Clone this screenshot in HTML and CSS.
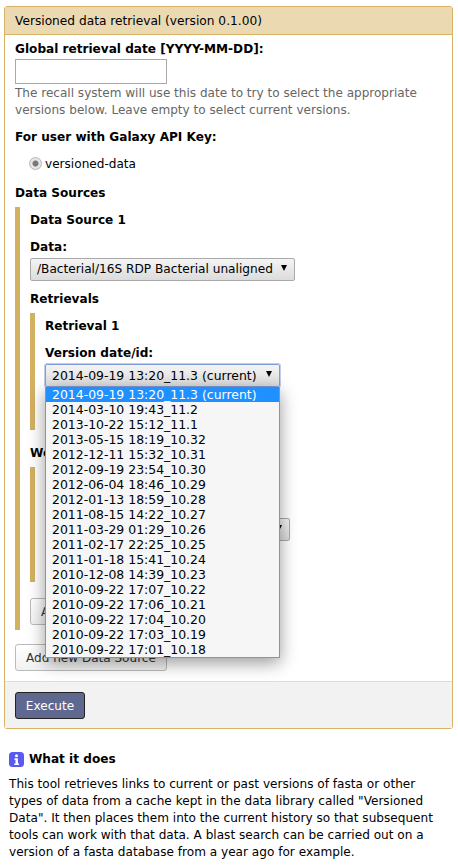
FILE: index.html
```html
<!DOCTYPE html>
<html lang="en">

<head>
    <meta charset="UTF-8">
    <meta name="viewport" content="width=device-width, initial-scale=1.0">
    <title>Versioned data retrieval</title>
    <link rel="stylesheet" href="styles.css">
</head>

<body>
    <div class="tool-card">
        <div class="tool-title">Versioned data retrieval (version 0.1.00)</div>
        <div class="tool-body">
            <div class="form-row">
                <label class="row-label label-tight">Global retrieval date [YYYY-MM-DD]:</label>
                <input class="text-input" type="text">
                <div class="help">The recall system will use this date to try to select the appropriate versions below. Leave empty to select current versions.</div>
            </div>
            <div class="form-row form-row-radio">
                <label class="row-label">For user with Galaxy API Key:</label>
                <div class="radio-row"><span class="radio"></span>versioned-data</div>
            </div>
            <div class="section-title">Data Sources</div>
            <div class="repeat repeat-outer">
                <div class="repeat-title">Data Source 1</div>
                <label class="row-label">Data:</label>
                <div class="select select-data"><span>/Bacterial/16S RDP Bacterial unaligned</span><i class="arrow"></i></div>
                <div class="section-title">Retrievals</div>
                <div class="repeat repeat-first">
                    <div class="repeat-title">Retrieval 1</div>
                    <label class="row-label">Version date/id:</label>
                    <!-- 展开的下拉框 -->
                    <div class="select-wrap">
                        <div class="select select-open"><span>2014-09-19 13:20_11.3 (current)</span><i class="arrow"></i></div>
                        <ul class="dropdown">
                            <li class="selected">2014-09-19 13:20_11.3 (current)</li>
                            <li>2014-03-10 19:43_11.2</li>
                            <li>2013-10-22 15:12_11.1</li>
                            <li>2013-05-15 18:19_10.32</li>
                            <li>2012-12-11 15:32_10.31</li>
                            <li>2012-09-19 23:54_10.30</li>
                            <li>2012-06-04 18:46_10.29</li>
                            <li>2012-01-13 18:59_10.28</li>
                            <li>2011-08-15 14:22_10.27</li>
                            <li>2011-03-29 01:29_10.26</li>
                            <li>2011-02-17 22:25_10.25</li>
                            <li>2011-01-18 15:41_10.24</li>
                            <li>2010-12-08 14:39_10.23</li>
                            <li>2010-09-22 17:07_10.22</li>
                            <li>2010-09-22 17:06_10.21</li>
                            <li>2010-09-22 17:04_10.20</li>
                            <li>2010-09-22 17:03_10.19</li>
                            <li>2010-09-22 17:01_10.18</li>
                        </ul>
                    </div>
                </div>
                <div class="section-title">Workflows</div>
                <div class="repeat repeat-second">
                    <div class="select select-hidden"><i class="arrow"></i></div>
                </div>
                <button class="btn">Add new Retrieval</button>
            </div>
            <button class="btn btn-source">Add new Data Source</button>
        </div>
        <div class="tool-footer">
            <button class="btn-execute">Execute</button>
        </div>
    </div>

    <div class="info">
        <div class="info-title">
            <svg class="info-icon" width="15" height="15" viewBox="0 0 15 15">
                <rect width="15" height="15" rx="3.5" fill="#5a5af0"/>
                <circle cx="7.5" cy="3.8" r="1.5" fill="#fff"/>
                <path d="M5.5 6.3h3.4v5.2h1.1v1.6H5.2v-1.6h1.3V7.9h-1z" fill="#fff"/>
            </svg>
            What it does
        </div>
        <p>This tool retrieves links to current or past versions of fasta or other types of data from a cache kept in the data library called "Versioned Data". It then places them into the current history so that subsequent tools can work with that data. A blast search can be carried out on a version of a fasta database from a year ago for example.</p>
    </div>
</body>

</html>
```

FILE: styles.css
```css
* {
    margin: 0;
    padding: 0;
    box-sizing: border-box;
}

ul {
    list-style: none;
}

body {
    font-family: "DejaVu Sans", sans-serif;
    font-size: 12.1px;
    line-height: 17px;
    color: #000;
    background: #fff;
    padding: 6px 5px 0 4px;
}

.tool-card {
    border: 1px solid #d8b365;
    border-radius: 3px;
}

.tool-title {
    height: 28px;
    padding: 6px 10px 4px;
    font-size: 12.2px;
    background: #ebd9b2;
    border-bottom: 1px solid #d8b365;
}

.tool-body {
    padding: 6px 10px 10px;
}

.form-row {
    margin-bottom: 10px;
}

.form-row-radio {
    margin-bottom: 12px;
}

.row-label {
    display: block;
    font-weight: bold;
    margin-bottom: 2px;
}

.label-tight {
    margin-bottom: 1px;
}

.text-input {
    display: block;
    width: 152px;
    height: 25px;
    border: 1px solid #aaa;
    background: #fff;
}

.help {
    color: #666;
    font-size: 12.05px;
    margin-top: 1px;
}

.radio-row {
    display: flex;
    align-items: center;
    margin-top: 10px;
    padding-left: 14px;
}

.radio {
    width: 13px;
    height: 13px;
    margin-right: 3px;
    margin-top: -2px;
    border: 1px solid #b4b4b4;
    border-radius: 50%;
    background: radial-gradient(circle, #777 0, #777 2.5px, #e6e6e6 3.5px);
}

.section-title {
    font-weight: bold;
    margin-bottom: 5px;
}

.repeat {
    border-left: 5px solid #d2b162;
    padding-left: 10px;
}

.repeat-title {
    font-weight: bold;
    padding-top: 5px;
    margin-bottom: 10px;
}

.repeat-outer {
    height: 423px;
}

.repeat-first {
    height: 117px;
    margin-bottom: 15px;
}

.repeat-second {
    height: 115px;
    margin-bottom: 16px;
    padding-top: 51px;
}

.select {
    display: flex;
    align-items: center;
    justify-content: space-between;
    height: 23px;
    padding: 0 7px 0 6px;
    border: 1px solid #aaa;
    border-radius: 2px;
    background: linear-gradient(#f4f4f4, #dcdcdc);
    white-space: nowrap;
}

.arrow {
    width: 0;
    height: 0;
    margin-top: -3px;
    margin-left: auto;
    border-left: 3.5px solid transparent;
    border-right: 3.5px solid transparent;
    border-top: 6px solid #000;
}

.select-data {
    width: 265px;
    margin-bottom: 10px;
    font-size: 12.15px;
}

.select-hidden {
    width: 245px;
}

.select-wrap {
    position: relative;
    width: 235px;
    font-size: 12.45px;
}

.select-open {
    border-color: #7f9ed9;
    box-shadow: 0 0 0 1px rgba(127, 158, 217, 0.5);
}

.dropdown {
    position: absolute;
    left: 0;
    top: 23px;
    width: 235px;
    z-index: 5;
    background: #f6f6f6;
    border: 1px solid #8197ad;
    border-top: 0;
    box-shadow: 0 5px 16px rgba(0, 0, 0, 0.4);
}

.dropdown li {
    height: 15px;
    line-height: 15px;
    padding-left: 6px;
    white-space: nowrap;
}

.dropdown .selected {
    background: #1e90ff;
    color: #fff;
}

.btn {
    display: block;
    height: 27px;
    padding: 0 10px;
    font: 12.05px "DejaVu Sans", sans-serif;
    color: #333;
    background: linear-gradient(#fff, #f2f2f2);
    border: 1px solid #bbb;
    border-radius: 3px;
}

.btn-source {
    margin-top: 14px;
}

.tool-footer {
    height: 47px;
    padding: 10px;
    background: #f2f2f2;
    border-top: 1px solid #ddd;
}

.btn-execute {
    display: block;
    width: 70px;
    height: 27px;
    font: 12.1px "DejaVu Sans", sans-serif;
    color: #fff;
    background: #5f6990;
    border: 1px solid #222;
    border-radius: 3px;
}

.info {
    padding: 22px 5px 0;
}

.info-title {
    display: flex;
    align-items: center;
    gap: 5px;
    font-weight: bold;
    margin-bottom: 8px;
}

.info-icon {
    flex: none;
}
```
